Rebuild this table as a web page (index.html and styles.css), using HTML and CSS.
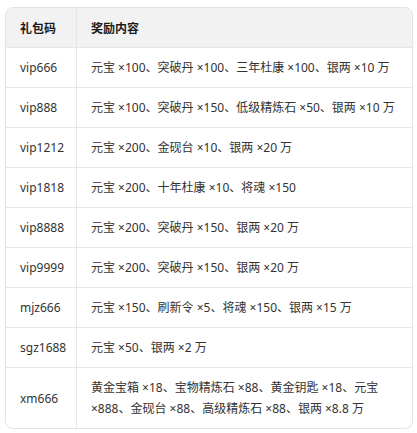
FILE: index.html
```html
<!DOCTYPE html>
<html lang="zh-CN">
<head>
<meta charset="utf-8">
<link rel="stylesheet" href="styles.css">
</head>
<body>
<div class="card">
<table class="codes">
<thead>
<tr><th class="c1">礼包码</th><th>奖励内容</th></tr>
</thead>
<tbody>
<tr><td class="c1">vip666</td><td>元宝 ×100、突破丹 ×100、三年杜康 ×100、银两 ×10 万</td></tr>
<tr><td class="c1">vip888</td><td>元宝 ×100、突破丹 ×150、低级精炼石 ×50、银两 ×10 万</td></tr>
<tr><td class="c1">vip1212</td><td>元宝 ×200、金砚台 ×10、银两 ×20 万</td></tr>
<tr><td class="c1">vip1818</td><td>元宝 ×200、十年杜康 ×10、将魂 ×150</td></tr>
<tr><td class="c1">vip8888</td><td>元宝 ×200、突破丹 ×150、银两 ×20 万</td></tr>
<tr><td class="c1">vip9999</td><td>元宝 ×200、突破丹 ×150、银两 ×20 万</td></tr>
<tr><td class="c1">mjz666</td><td>元宝 ×150、刷新令 ×5、将魂 ×150、银两 ×15 万</td></tr>
<tr><td class="c1">sgz1688</td><td>元宝 ×50、银两 ×2 万</td></tr>
<tr><td class="c1">xm666</td><td>黄金宝箱 ×18、宝物精炼石 ×88、黄金钥匙 ×18、元宝 ×888、金砚台 ×88、高级精炼石 ×88、银两 ×8.8 万</td></tr>
</tbody>
</table>
</div>
</body>
</html>
```
FILE: styles.css
```css
html, body {
  margin: 0;
  padding: 0;
  background: #ffffff;
}
body {
  padding: 7px 4px 0 5px;
  font-family: "Noto Sans", "Noto Sans CJK SC", sans-serif;
  font-size: 12px;
  color: #333333;
}
.card {
  width: 406px;
  border: 1px solid #e3e3e3;
  border-radius: 8px;
  overflow: hidden;
  box-shadow: 0 1px 2px rgba(0,0,0,0.04);
}
.codes {
  width: 100%;
  border-collapse: collapse;
  table-layout: fixed;
}
.codes th, .codes td {
  text-align: left;
  padding: 9px 14px;
  line-height: 21px;
  vertical-align: middle;
  border-bottom: 1px solid #e6e6e6;
}
.codes tr:last-child td {
  border-bottom: none;
}
.codes .c1 {
  width: 42px;
  border-right: 1px solid #e6e6e6;
}
.codes th {
  background: #f2f2f2;
  color: #1a1a1a;
  font-weight: bold;
  font-family: "Noto Sans CJK SC", sans-serif;
}
```
